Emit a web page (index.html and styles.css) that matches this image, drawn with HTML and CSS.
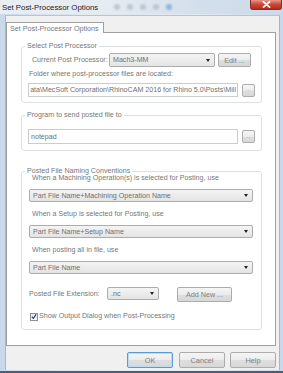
FILE: index.html
```
<!DOCTYPE html>
<html>
<head>
<meta charset="utf-8">
<link rel="stylesheet" href="styles.css">
</head>
<body>
<div class="window">
  <div class="titlebar">
    <span class="title">Set Post-Processor Options</span>
    <div class="ghosts"><i></i><i></i><i></i><i></i><i></i></div>
    <div class="close"><svg width="9" height="7" viewBox="0 0 9 7"><path d="M1.5 0.8 L7.5 6.2 M7.5 0.8 L1.5 6.2" stroke="#fff" stroke-width="1.8" stroke-linecap="round"/></svg></div>
  </div>
  <div class="client">
    <div class="tabs"><div class="tab">Set Post-Processor Options</div></div>
    <div class="panel">
      <div class="group g1">
        <span class="legend">Select Post Processor</span>
        <div class="row r-current">
          <span class="lbl">Current Post Processor:</span>
          <div class="combo c-post"><span>Mach3-MM</span><b class="arrow"></b></div>
          <div class="btn b-edit">Edit ...</div>
        </div>
        <div class="lbl l-folder">Folder where post-processor files are located:</div>
        <div class="row">
          <div class="field"><span>ata\MecSoft Corporation\RhinoCAM 2016 for Rhino 5.0\Posts\Mill</span></div>
          <div class="btn b-browse">...</div>
        </div>
      </div>
      <div class="group g2">
        <span class="legend">Program to send posted file to</span>
        <div class="row">
          <div class="field f-note"><span>notepad</span></div>
          <div class="btn b-browse">...</div>
        </div>
      </div>
      <div class="group g3">
        <span class="legend">Posted File Naming Conventions</span>
        <div class="lbl l-when l-first">When a Machining Operation(s) is selected for Posting, use</div>
        <div class="combo c-wide"><span>Part File Name+Machining Operation Name</span><b class="arrow"></b></div>
        <div class="lbl l-when">When a Setup is selected for Posting, use</div>
        <div class="combo c-wide"><span>Part File Name+Setup Name</span><b class="arrow"></b></div>
        <div class="lbl l-when">When posting all in file, use</div>
        <div class="combo c-wide"><span>Part File Name</span><b class="arrow"></b></div>
        <div class="row r-ext">
          <span class="lbl">Posted File Extension:</span>
          <div class="combo c-ext"><span>.nc</span><b class="arrow"></b></div>
          <div class="btn b-add">Add New ...</div>
        </div>
        <div class="row r-check">
          <span class="check"><svg width="7" height="7" viewBox="0 0 7 7"><path d="M1 3.8 L2.8 5.6 L6 1" fill="none" stroke="#1f3f8f" stroke-width="1.3"/></svg></span>
          <span class="lbl">Show Output Dialog when Post-Processing</span>
        </div>
      </div>
    </div>
    <div class="buttons">
      <div class="btn b-dlg b-ok">OK</div>
      <div class="btn b-dlg b-cancel">Cancel</div>
      <div class="btn b-dlg">Help</div>
    </div>
  </div>
</div>
</body>
</html>
```
FILE: styles.css
```
* { box-sizing: border-box; }
html, body { margin: 0; padding: 0; }
body {
  width: 283px; height: 373px; overflow: hidden;
  font-family: "Liberation Sans", Arial, sans-serif;
  background: #5a6e86;
}
.window {
  width: 283px; height: 373px;
  background: linear-gradient(90deg, #c9d9ea 0%, #dfe8f1 30%, #e3eaf2 70%, #c8d8ea 100%);
  display: flex; flex-direction: column;
  position: relative;
  border-bottom: 2px solid #4d5f74;
}
.titlebar {
  height: 14px; flex: none;
  display: flex; align-items: center;
  position: relative;
  background: linear-gradient(90deg, #e9eef3 0%, #e4ebf2 40%, #d3dfeb 70%, #cbdbeb 100%);
}
.title {
  font-size: 7.8px; color: #222; padding-left: 2px; padding-top: 1px;
  white-space: nowrap;
}
.ghosts { display: flex; gap: 7px; margin-left: 16px; align-items: center; }
.ghosts i {
  display: block; width: 6px; height: 6px; border-radius: 50%;
  background: #bcc6d1; filter: blur(1.2px);
}
.ghosts i:last-child { background: #93b3da; }
.close {
  position: absolute; right: 1px; top: 0;
  width: 32px; height: 10px;
  background: linear-gradient(#e29a8c 0%, #cf4b3a 45%, #b5291b 100%);
  border: 1px solid #8a2c24; border-top: none;
  border-radius: 0 0 3px 3px;
  display: flex; align-items: center; justify-content: center;
}
.client {
  flex: 1;
  margin: 1px 3px 1px 5px;
  background: #f0f0f0;
  border-left: 1px solid #a9b6c4;
  border-right: 1px solid #a9b6c4;
  border-top: 1px solid #b8c4d0;
  padding: 6px 3px 0 0;
  display: flex; flex-direction: column;
}
.tabs { display: flex; height: 10px; flex: none; }
.tab {
  width: 98px;
  background: #fff;
  border: 1px solid #a0a0a0; border-bottom: none;
  font-size: 7.2px; color: #777;
  padding: 1px 0 0 3px; line-height: 9px;
  white-space: nowrap;
  position: relative; z-index: 1;
  height: 11px;
}
.panel {
  height: 314px; flex: none;
  background: #fff;
  border: 1px solid #a0a0a0;
  padding: 13px 13px 0 14px;
  display: flex; flex-direction: column;
}
.group {
  border: 1px solid #dcdfe3;
  border-radius: 3px;
  position: relative;
  padding: 0 0 0 6px;
  display: flex; flex-direction: column;
}
.legend {
  position: absolute; top: -4px; left: 3px;
  background: #fff; padding: 0 2px;
  font-size: 7.1px; color: #777; line-height: 7px;
  white-space: nowrap;
}
.lbl { font-size: 7.1px; color: #777; white-space: nowrap; line-height: 9px; }
.row { display: flex; align-items: center; }
.g1 { height: 57px; padding-top: 6px; }
.g2 { height: 36px; margin-top: 12px; padding-top: 13px; }
.g3 { height: 159px; margin-top: 20px; padding-top: 2px; }
.r-current .lbl { width: 81px; padding-left: 4px; }
.l-folder { margin: 3px 0 4px 1px; }
.combo {
  height: 14px;
  border: 1px solid #acacac;
  border-radius: 2px;
  background: linear-gradient(#f4f4f4, #e4e4e4);
  display: flex; align-items: center; justify-content: space-between;
  padding: 0 4px 0 3px;
  font-size: 7.1px; color: #707070; white-space: nowrap;
}
.arrow {
  width: 0; height: 0;
  border-left: 2.5px solid transparent; border-right: 2.5px solid transparent;
  border-top: 3px solid #222;
}
.c-post { width: 106px; }
.btn {
  border: 1px solid #acacac;
  border-radius: 2px;
  background: linear-gradient(#f5f5f5 0%, #ececec 50%, #dedede 51%, #d8d8d8 100%);
  display: flex; align-items: center; justify-content: center;
  font-size: 7.2px; color: #808080; white-space: nowrap;
}
.b-edit { width: 33px; height: 14px; margin-left: 3px; }
.field {
  width: 210px; height: 14px;
  border: 1px solid #c9ccd2;
  background: #fff;
  display: flex; align-items: center; justify-content: flex-end;
  overflow: hidden;
  font-size: 7.1px; color: #707070; white-space: nowrap;
  padding: 0 1px;
}
.f-note { justify-content: flex-start; height: 15px; padding: 0 2px; }
.b-browse { width: 13px; height: 13px; margin-left: 4px; font-size: 6px; padding-bottom: 2px; color: #999; }
.l-when { margin: 8px 0 0 4px; height: 9px; }
.l-when.l-first { margin-top: 0; }
.c-wide { width: 224px; margin: 6px 0 0 1px; height: 13px; }
.r-ext { margin-top: 13px; height: 15px; }
.r-ext .lbl { width: 79px; padding-left: 1px; }
.c-ext { width: 52px; height: 13px; align-self: flex-start; }
.b-add { width: 55px; height: 15px; margin-left: 18px; font-size: 7.2px; }
.r-check { margin-top: 10px; padding-left: 2px; }
.check {
  width: 8px; height: 8px;
  border: 1px solid #8f8f8f;
  background: linear-gradient(#e6e6e6, #fafafa);
  display: flex; align-items: center; justify-content: center;
  margin-right: 1px;
}
.buttons {
  display: flex; justify-content: flex-end;
  margin-top: 6px;
}
.b-dlg { width: 46px; height: 16px; margin-left: 5px; font-size: 7.4px; }
.b-ok { border-color: #5b9bd3; box-shadow: inset 0 0 0 1px #b8dcf4; margin-right: 1px; }
```
